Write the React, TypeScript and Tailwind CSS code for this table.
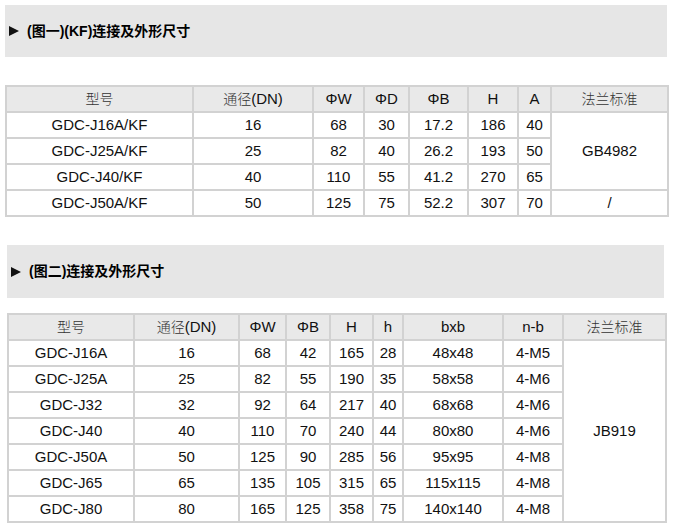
import React from 'react';

const font = { fontFamily: '"Liberation Sans", Arial, "Noto Sans CJK SC", sans-serif' };

type Col = { label: React.ReactNode; w: number };

const cn = (s: string) => <span className="text-[14px] font-light text-[#333]">{s}</span>;

const kfCols: Col[] = [
  { label: cn('型号'), w: 187 },
  { label: <>{cn('通径')}(DN)</>, w: 120 },
  { label: 'ΦW', w: 51 },
  { label: 'ΦD', w: 45 },
  { label: 'ΦB', w: 59 },
  { label: 'H', w: 50 },
  { label: 'A', w: 33 },
  { label: cn('法兰标准'), w: 117 },
];

const kfRows = [
  ['GDC-J16A/KF', '16', '68', '30', '17.2', '186', '40'],
  ['GDC-J25A/KF', '25', '82', '40', '26.2', '193', '50'],
  ['GDC-J40/KF', '40', '110', '55', '41.2', '270', '65'],
  ['GDC-J50A/KF', '50', '125', '75', '52.2', '307', '70'],
];

const jCols: Col[] = [
  { label: cn('型号'), w: 126 },
  { label: <>{cn('通径')}(DN)</>, w: 105 },
  { label: 'ΦW', w: 47 },
  { label: 'ΦB', w: 44 },
  { label: 'H', w: 43 },
  { label: 'h', w: 30 },
  { label: 'bxb', w: 100 },
  { label: 'n-b', w: 60 },
  { label: cn('法兰标准'), w: 103 },
];

const jRows = [
  ['GDC-J16A', '16', '68', '42', '165', '28', '48x48', '4-M5'],
  ['GDC-J25A', '25', '82', '55', '190', '35', '58x58', '4-M6'],
  ['GDC-J32', '32', '92', '64', '217', '40', '68x68', '4-M6'],
  ['GDC-J40', '40', '110', '70', '240', '44', '80x80', '4-M6'],
  ['GDC-J50A', '50', '125', '90', '285', '56', '95x95', '4-M8'],
  ['GDC-J65', '65', '135', '105', '315', '65', '115x115', '4-M8'],
  ['GDC-J80', '80', '165', '125', '358', '75', '140x140', '4-M8'],
];

const cell = 'border-2 border-[#d2d2d2] text-center align-middle p-0';

function TitleBar({ text, className }: { text: string; className: string }) {
  return (
    <div className={`bg-[#e6e6e6] flex items-center pl-[3px] text-[14px] font-bold text-black ${className}`}>
      {/* the ► marker, drawn so its size matches */}
      <svg width="12" height="12" viewBox="0 0 12 12" className="mr-[7px] shrink-0">
        <path d="M1 1 L11 6 L1 11 Z" fill="#111" />
      </svg>
      {text}
    </div>
  );
}

function Header({ cols }: { cols: Col[] }) {
  return (
    <>
      <colgroup>
        {cols.map((c, i) => (
          <col key={i} style={{ width: c.w }} />
        ))}
      </colgroup>
      <thead>
        <tr className="h-[26px] bg-[#e9e9e9]">
          {cols.map((c, i) => (
            <th key={i} className={`${cell} font-normal`}>{c.label}</th>
          ))}
        </tr>
      </thead>
    </>
  );
}

export default function App() {
  return (
    <div className="w-[675px] h-[524px] bg-white text-[15px] text-[#111] overflow-hidden" style={font}>
      <TitleBar text="(图一)(KF)连接及外形尺寸" className="ml-[5px] mt-[5px] w-[662px] h-[52px]" />

      <table className="ml-[5px] mt-[28px] w-[662px] table-fixed border-collapse">
        <Header cols={kfCols} />
        <tbody>
          {kfRows.map((r, i) => (
            <tr key={i} className="h-[26px]">
              {r.map((v, j) => (
                <td key={j} className={cell}>{v}</td>
              ))}
              {i === 0 && <td rowSpan={3} className={cell}>GB4982</td>}
              {i === 3 && <td className={cell}>/</td>}
            </tr>
          ))}
        </tbody>
      </table>

      <TitleBar text="(图二)连接及外形尺寸" className="ml-[7px] mt-[28px] w-[657px] h-[53px]" />

      <table className="ml-[7px] mt-[15px] w-[658px] table-fixed border-collapse">
        <Header cols={jCols} />
        <tbody>
          {jRows.map((r, i) => (
            <tr key={i} className="h-[26px]">
              {r.map((v, j) => (
                <td key={j} className={cell}>{v}</td>
              ))}
              {i === 0 && <td rowSpan={7} className={cell}>JB919</td>}
            </tr>
          ))}
        </tbody>
      </table>
    </div>
  );
}
